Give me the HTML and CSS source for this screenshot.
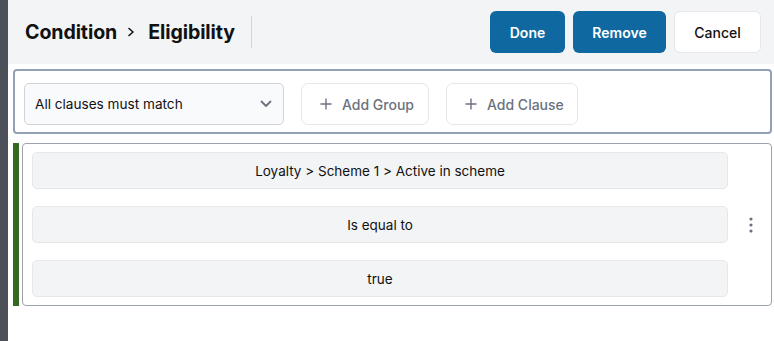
FILE: index.html
```html
<!DOCTYPE html>
<html>
<head>
<meta charset="utf-8">
<link rel="stylesheet" href="styles.css">
</head>
<body>
<div class="strip"></div>
<div class="main">
  <header class="header">
    <h1 class="title">Condition <span class="sep">
      <svg width="8" height="12" viewBox="0 0 8 12"><path d="M2 2.5 L6 6 L2 9.5" fill="none" stroke="#111" stroke-width="1.6" stroke-linecap="round" stroke-linejoin="round"/></svg>
    </span> Eligibility</h1>
    <div class="divider"></div>
    <div class="actions">
      <button class="btn primary done">Done</button>
      <button class="btn primary remove">Remove</button>
      <button class="btn cancel">Cancel</button>
    </div>
  </header>
  <section class="toolbar">
    <div class="select">
      <span>All clauses must match</span>
      <svg width="12" height="8" viewBox="0 0 12 8"><path d="M1.5 1.5 L6 6 L10.5 1.5" fill="none" stroke="#6b7280" stroke-width="1.8" stroke-linecap="round" stroke-linejoin="round"/></svg>
    </div>
    <button class="add group"><svg width="12" height="12" viewBox="0 0 12 12"><path d="M6 0.5 V11.5 M0.5 6 H11.5" stroke="#6b7280" stroke-width="1.4"/></svg>Add Group</button>
    <button class="add clause"><svg width="12" height="12" viewBox="0 0 12 12"><path d="M6 0.5 V11.5 M0.5 6 H11.5" stroke="#6b7280" stroke-width="1.4"/></svg>Add Clause</button>
  </section>
  <section class="clause-row">
    <div class="bar"></div>
    <div class="clause-box">
      <div class="fields">
        <div class="field">Loyalty &gt; Scheme 1 &gt; Active in scheme</div>
        <div class="field">Is equal to</div>
        <div class="field">true</div>
      </div>
      <div class="kebab">
        <svg width="4" height="16" viewBox="0 0 4 16"><circle cx="2" cy="2" r="1.6" fill="#6b7280"/><circle cx="2" cy="8" r="1.6" fill="#6b7280"/><circle cx="2" cy="14" r="1.6" fill="#6b7280"/></svg>
      </div>
    </div>
  </section>
</div>
</body>
</html>
```
FILE: styles.css
```css
* { box-sizing: border-box; }
html, body { margin: 0; padding: 0; height: 100%; }
body {
  display: flex;
  background: #fff;
  font-family: Inter, "Liberation Sans", Arial, sans-serif;
  color: #111827;
  overflow: hidden;
}
svg { flex: none; }
.strip {
  width: 8px;
  flex: none;
  background: #4b5059;
}
.main {
  flex: 1;
  display: flex;
  flex-direction: column;
  min-width: 0;
}
.header {
  height: 64px;
  background: #f3f4f6;
  display: flex;
  align-items: center;
  padding: 0 13px 0 17px;
}
.title {
  margin: 0;
  font-size: 19.6px;
  font-weight: 700;
  color: #111;
  display: flex;
  align-items: center;
  white-space: nowrap;
  letter-spacing: -0.1px;
}
.sep {
  display: inline-flex;
  margin: 0 13px 0 10px;
}
.divider {
  width: 1px;
  height: 32px;
  background: #d1d5db;
  margin-left: 16px;
}
.actions {
  margin-left: auto;
  display: flex;
  gap: 8px;
}
.btn {
  height: 42px;
  border-radius: 6px;
  font-family: inherit;
  font-size: 14px;
  font-weight: 600;
  border: 1px solid transparent;
  cursor: pointer;
}
.primary {
  background: #0f69a0;
  color: #fff;
}
.done { width: 75px; }
.remove { width: 93px; }
.cancel {
  width: 87px;
  background: #fff;
  border-color: #e5e7eb;
  color: #111;
  font-weight: 500;
}
.toolbar {
  margin: 5px 2px 0 5px;
  height: 65px;
  border: 2px solid #94a0b4;
  border-radius: 4px;
  display: flex;
  align-items: flex-start;
  padding: 12px 9px 0 9px;
  gap: 17px;
}
.select {
  width: 260px;
  height: 42px;
  background: #f9fafb;
  border: 1px solid #d1d5db;
  border-radius: 5px;
  display: flex;
  align-items: center;
  justify-content: space-between;
  padding: 0 11px 0 10px;
  font-size: 13.6px;
  color: #111;
  white-space: nowrap;
}
.add {
  height: 42px;
  background: #fff;
  border: 1px solid #e5e7eb;
  border-radius: 7px;
  display: flex;
  align-items: center;
  gap: 10px;
  padding: 0 18px;
  font-family: inherit;
  font-size: 14px;
  font-weight: 500;
  color: #6b7280;
  white-space: nowrap;
}
.group { width: 128px; }
.clause { width: 132px; }
.clause-row {
  margin: 9px 2px 0 5px;
  display: flex;
  gap: 3px;
}
.bar {
  width: 6px;
  background: #326a21;
}
.clause-box {
  flex: 1;
  border: 1px solid #9ca3af;
  border-radius: 4px;
  display: flex;
  align-items: center;
  padding: 8px 0 8px 9px;
}
.fields {
  width: 696px;
  display: flex;
  flex-direction: column;
  gap: 17px;
}
.field {
  height: 37px;
  background: #f3f4f6;
  border: 1px solid #e5e7eb;
  border-radius: 5px;
  display: flex;
  align-items: center;
  justify-content: center;
  font-size: 13.5px;
  color: #111;
}
.kebab {
  flex: 1;
  display: flex;
  justify-content: center;
  padding-left: 3px;
}
```
